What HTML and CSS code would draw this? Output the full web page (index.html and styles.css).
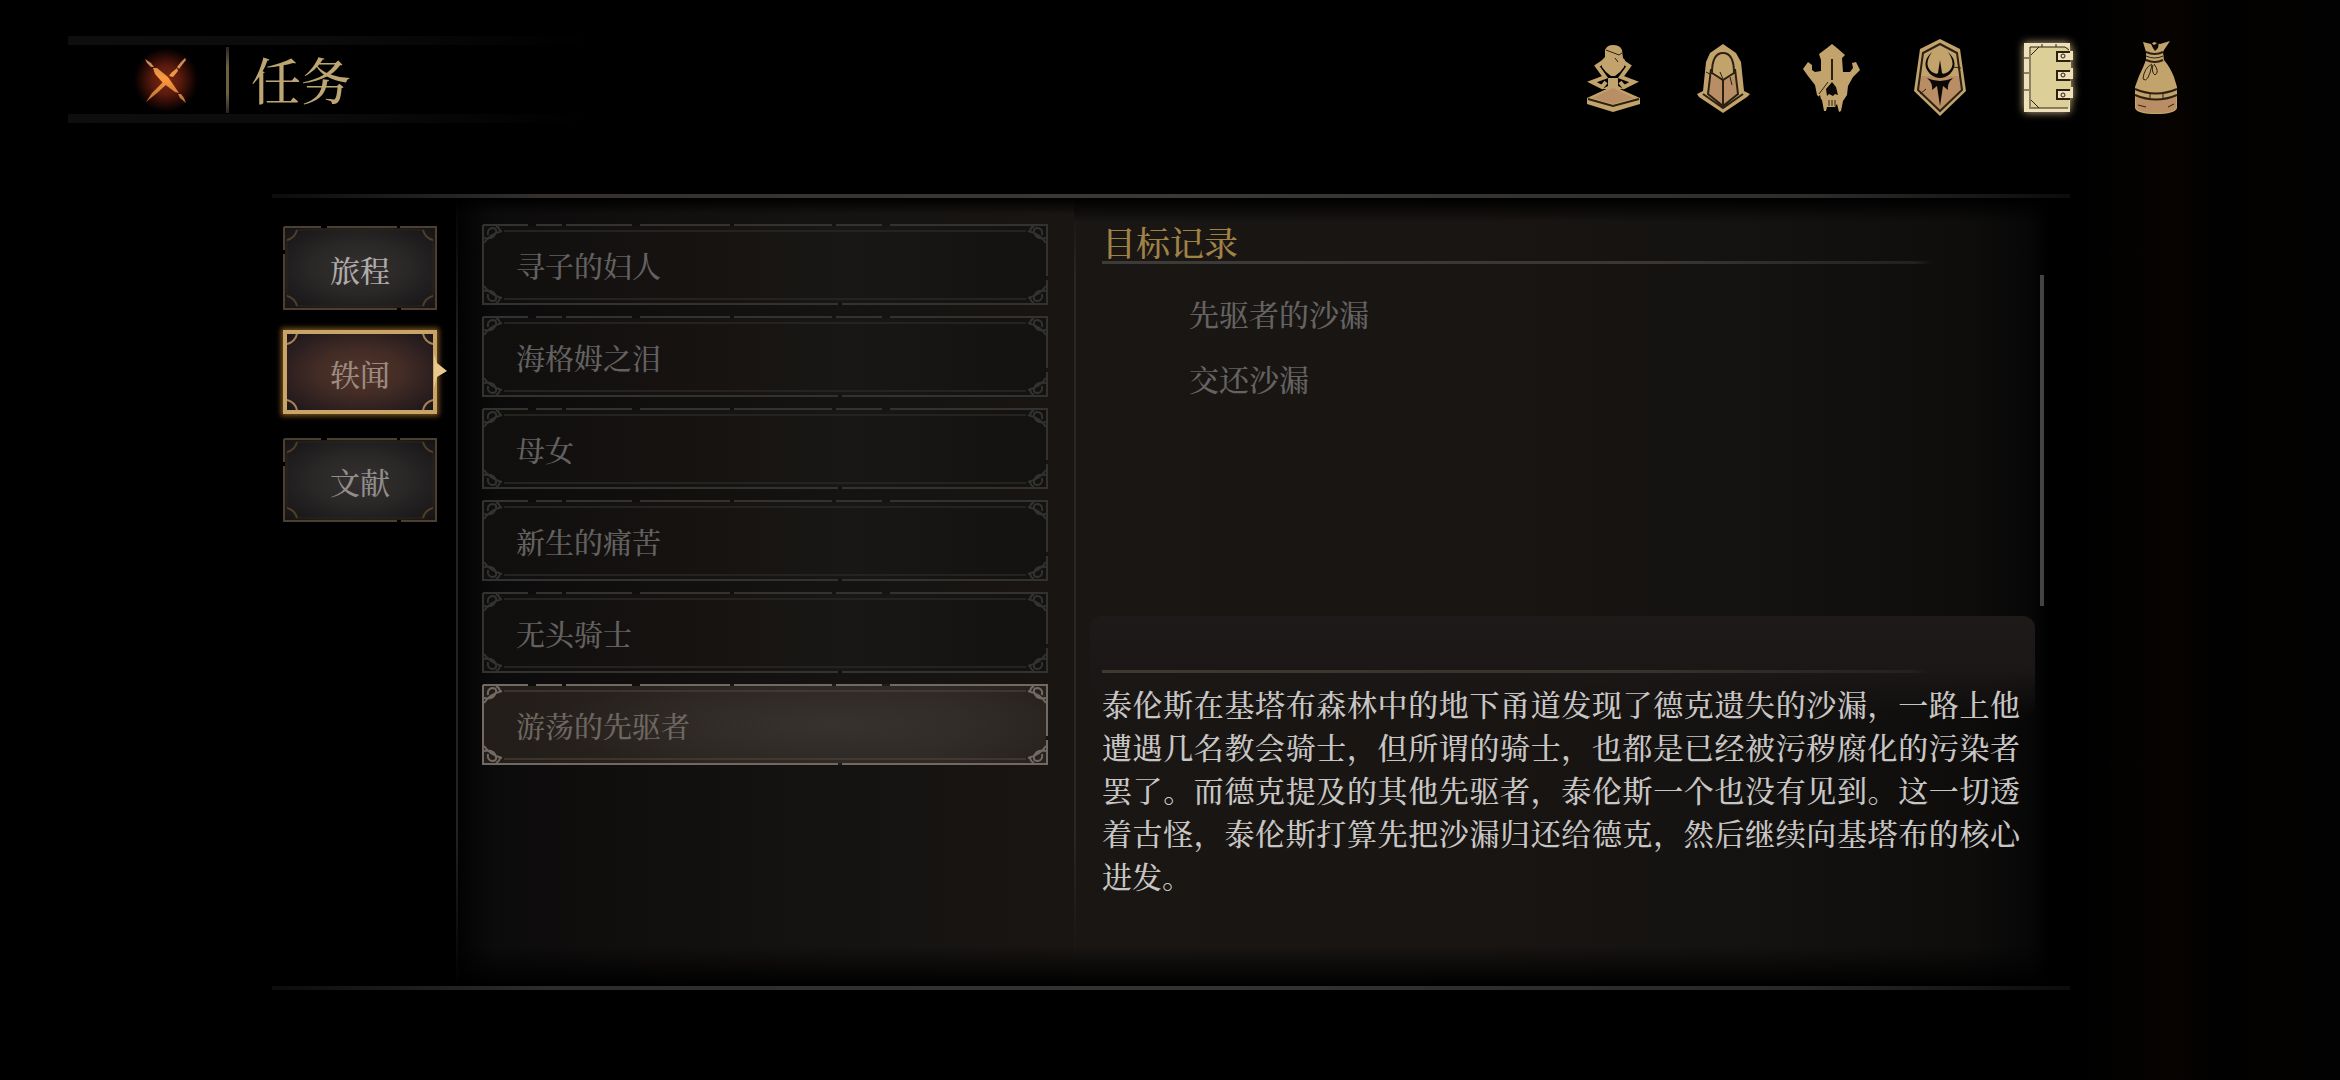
FILE: index.html
```html
<!DOCTYPE html>
<html lang="zh-CN">
<head>
<meta charset="utf-8">
<meta name="viewport" content="width=device-width, initial-scale=1">
<title>任务</title>
<link rel="stylesheet" href="styles.css">
</head>
<body>
<header class="topbar">
  <div class="title-plate">
    <button class="close" type="button" aria-label="关闭">
      <svg viewBox="0 0 44 48" width="44" height="48" aria-hidden="true">
        <defs>
          <linearGradient id="ember" x1="0" y1="0" x2="0" y2="1">
            <stop offset="0" stop-color="#b9895a"/><stop offset=".45" stop-color="#ff9a3c"/><stop offset="1" stop-color="#b5703a"/>
          </linearGradient>
        </defs>
        <path fill="url(#ember)" d="M41 2L42 4L38 9L35 13L33 11L37 6ZM33 12L34 15L29 21L25 20L27 17ZM20 25L23 28L13 37L2 46L8 37Z"/>
        <path fill="url(#ember)" d="M1 3L7 7L10 11L7 11L3 7ZM9 12L13 12L24 21L35 37L31 36L19 27L11 18ZM34 38L37 38L40 42L42 47L36 42Z"/>
      </svg>
    </button>
    <span class="title-rule"></span>
    <h1 class="title">任务</h1>
  </div>
  <nav class="menu" aria-label="菜单">
    <button class="menu-item" type="button" aria-label="角色">
      <svg viewBox="0 0 60 80" width="60" height="80" aria-hidden="true">
        <path class="ink" d="M19 12Q21 7 27 7Q34 7 36 12L37 20L39 22L38 29L34 34L29 38H25L20 34L16 29L16 22L19 19Z"/>
        <path class="cut" d="M20 12L33 17L36 15M29 20L32 24"/>
        <path class="bone" d="M17 24L11 28L19 39L6 44L16 49L20 44M37 24L43 28L35 39L48 44L38 49L34 44"/>
        <path class="ink" d="M22 40H32V48L38 51H16L22 48Z"/>
        <path class="ink" d="M27 48L54 60V66L27 74L1 66V60Z"/>
        <path class="warm" d="M27 50L48 60L27 66L6 60Z"/>
        <path class="cut w2" d="M2 61L27 68L53 61"/>
      </svg>
    </button>
    <button class="menu-item" type="button" aria-label="护甲">
      <svg viewBox="0 0 60 80" width="60" height="80" aria-hidden="true">
        <path class="ink" d="M29 6L42 15L47 24L50 53L56 56L53 59L29 75L5 59L3 56L9 53L12 24L16 15Z"/>
        <path class="warm" d="M16 37L29 43L42 37L44 57L29 67L14 57Z"/>
        <path class="cut w2" d="M18 35Q18 15 29 15T40 35L29 42ZM17 31L14 56L29 68L44 56L41 31M29 42V67M9 56L29 70L49 56"/>
        <path class="cut" d="M29 41L26 34M36 39L38 47M12 34L16 36"/>
      </svg>
    </button>
    <button class="menu-item" type="button" aria-label="兽骨">
      <svg viewBox="0 0 60 80" width="60" height="80" aria-hidden="true">
        <path class="ink" d="M30 6L35 10L43 17L40 20L41 34H48L51 30L50 25L54 24L58 32L51 39L46 48L45 57L41 63L39 73L37 74L35 66L33 69H25L24 73H22L20 62L15 57L13 47L6 38L1 31L6 24L10 27V32L13 34L19 33V22L17 16L25 10Z"/>
        <path class="hole" d="M30 44L34 49L36 57L33 56L31 58L27 56L25 58L24 51ZM18 57L15 60L19 61Z"/>
        <path class="cut w2" d="M30 21V42"/>
        <path class="cut" d="M26 44L17 56M27 62V68M30 62V68M33 62V68"/>
      </svg>
    </button>
    <button class="menu-item" type="button" aria-label="盾徽">
      <svg viewBox="0 0 60 80" width="60" height="80" aria-hidden="true">
        <path class="ink" d="M30 1L50 11L56 53L30 78L4 53L10 11Z"/>
        <path class="warm" d="M30 38L50 38L51 52L30 72L9 52L11 38Z"/>
        <path class="cut w2" d="M30 6L47 15L52 52L30 73L8 52L13 15Z"/>
        <path class="cut" d="M43 29L51 30M10 56L16 51"/>
        <path class="hole" d="M22 14Q13 27 22 34Q27 37 28 35L30 22L32 35Q33 37 38 34Q47 27 38 14Q50 25 40 36Q30 44 20 36Q10 25 22 14ZM17 40Q30 46 43 40Q37 45 38 52L33 48L30 68L27 48L22 52Q23 45 17 40Z"/>
      </svg>
    </button>
    <button class="menu-item is-current" type="button" aria-label="任务" aria-current="page">
      <svg viewBox="0 0 60 80" width="60" height="80" aria-hidden="true">
        <path fill="#eee0b8" d="M6 5H52V13H55V22H52V30H55V41H52V49H55V60H52V74H6Z"/>
        <path fill="#dccf98" d="M13 9H51V14H39V24H53V33H39V43H53V52H39V62H51V70H13Z"/>
        <path class="cut" d="M12 71V9H47L51 12M13 17L21 9M13 62L21 70M13 70H50M6 20H11M6 35H11M6 52H11M24 6V9M38 6V9"/>
        <path class="cut w2" d="M52 14H39V23H52M52 33H39V42H52M52 52H39V61H52"/>
        <circle class="cut" cx="45" cy="18" r="2"/><circle class="cut" cx="45" cy="37" r="2"/><circle class="cut" cx="45" cy="57" r="2"/>
      </svg>
    </button>
    <button class="menu-item" type="button" aria-label="背包">
      <svg viewBox="0 0 60 80" width="60" height="80" aria-hidden="true">
        <path class="ink" d="M17 4L25 6L28 4L34 6L44 3L38 12L37 14L38 22Q44 29 48 39L51 49V70Q49 76 30 76T9 70V49L13 38Q17 30 20 22V14Z"/>
        <path class="warm" d="M10 59Q30 66 50 59V70Q46 75 30 75T10 70Z"/>
        <path class="cut w2" d="M20 14Q29 18 37 14M20 22Q29 26 37 22M9 51Q30 60 51 51M9 57Q30 66 51 57"/>
        <path class="cut" d="M20 18Q29 22 37 18M26 26Q18 30 17 41Q22 46 26 27M27 27Q25 34 29 37Q34 34 28 26M24 55V60M37 55V60M12 67L20 69M42 69L48 66"/>
        <path class="hole" d="M24 4L28 7L33 4L32 10L29 13L27 10Z"/>
      </svg>
    </button>
  </nav>
</header>

<main class="journal">
  <nav class="tabs" aria-label="任务分类">
    <button class="tab" type="button">旅程</button>
    <button class="tab is-active" type="button" aria-current="true">轶闻
      <svg class="tab-arrow" viewBox="0 0 14 34" width="14" height="34" aria-hidden="true">
        <path fill="#e9c98b" d="M1 0L4 9L14 17L4 23L1 34Z"/>
      </svg>
    </button>
    <button class="tab" type="button">文献</button>
  </nav>

  <section class="quests" aria-label="任务列表">
    <button class="quest" type="button">寻子的妇人</button>
    <button class="quest" type="button">海格姆之泪</button>
    <button class="quest" type="button">母女</button>
    <button class="quest" type="button">新生的痛苦</button>
    <button class="quest" type="button">无头骑士</button>
    <button class="quest is-active" type="button" aria-current="true">游荡的先驱者</button>
  </section>

  <section class="detail">
    <div class="objectives">
      <div class="objectives-body">
        <h2 class="heading">目标记录</h2>
        <ul class="goals">
          <li>先驱者的沙漏</li>
          <li>交还沙漏</li>
        </ul>
      </div>
      <div class="scrollbar"></div>
    </div>
    <article class="story">
      <p>泰伦斯在基塔布森林中的地下甬道发现了德克遗失的沙漏，一路上他遭遇几名教会骑士，但所谓的骑士，也都是已经被污秽腐化的污染者罢了。而德克提及的其他先驱者，泰伦斯一个也没有见到。这一切透着古怪，泰伦斯打算先把沙漏归还给德克，然后继续向基塔布的核心进发。</p>
    </article>
  </section>
</main>
</body>
</html>
```
FILE: styles.css
```css
* {
  box-sizing: border-box;
}

body {
  margin: 0;
  min-height: 100vh;
  display: flex;
  flex-direction: column;
  color: #6b6867;
  background:
    linear-gradient(90deg, transparent 89%, #040201 91%, #060301 93%, #010101 95%, #040201 97%, #020202 100%),
    #000;
  font-family: "Noto Serif CJK SC", "Noto Sans CJK SC", serif;
  font-size: 30px;
  font-weight: 500;
}

button {
  margin: 0;
  padding: 0;
  border: 0;
  background: none;
  color: inherit;
  font: inherit;
  cursor: pointer;
}

h1, h2, p, ul {
  margin: 0;
  padding: 0;
  font-weight: inherit;
}

/* top bar */

.topbar {
  display: flex;
  justify-content: space-between;
  align-items: flex-start;
  height: 194px;
  padding: 36px 154px 0 68px;
}

.title-plate {
  display: flex;
  align-items: center;
  width: 522px;
  height: 87px;
  background:
    linear-gradient(90deg, #0e0e0e, #0b0b0b 50%, transparent) top / 100% 9px no-repeat,
    linear-gradient(90deg, #0e0e0e, #0b0b0b 50%, transparent) bottom / 100% 9px no-repeat;
}

.close {
  display: flex;
  align-items: center;
  justify-content: center;
  width: 64px;
  height: 64px;
  margin-left: 66px;
  background: radial-gradient(closest-side, #7a2a14, #5a1a0c 45%, #200804 80%, transparent);
}

.title-rule {
  width: 3px;
  height: 66px;
  margin-left: 28px;
  background: linear-gradient(#2a241a, #6e5f42 30%, #6e5f42 70%, #2a241a);
}

.title {
  margin-left: 22px;
  padding-bottom: 4px;
  font-size: 50px;
  line-height: 64px;
  color: #bda672;
}

.menu {
  display: flex;
  gap: 48px;
  margin-top: 2px;
}

.menu-item {
  width: 60px;
  height: 80px;
}

.menu-item svg {
  display: block;
}

.is-current svg {
  filter: drop-shadow(0 0 4px #c9b183);
}

.ink { fill: #c2a36b; }
.warm { fill: #b98e64; }
.hole { fill: #0c0805; }
.bone { fill: none; stroke: #c2a36b; stroke-width: 4; }
.cut { fill: none; stroke: #2c2013; stroke-width: 1; }
.w2 { stroke-width: 2; }

/* journal */

.journal {
  flex: 1;
  display: grid;
  grid-template-columns: 184px 618fr 996fr;
  margin: 0 270px 90px 272px;
  padding: 4px 0;
  background:
    linear-gradient(90deg, #0c0c0c, #33302e 15%, #3b3937 50%, #302e2c 85%, #0c0c0c) top / 100% 4px no-repeat,
    linear-gradient(90deg, #0c0c0c, #2e2c2b 15%, #353332 50%, #2a2827 85%, #0c0c0c) bottom / 100% 4px no-repeat;
}

.tabs {
  display: flex;
  flex-direction: column;
  gap: 20px;
  padding: 28px 19px 0 11px;
}

.tab {
  position: relative;
  height: 84px;
  padding-top: 2px;
  line-height: 40px;
  color: #aeabaa;
  border: 2px solid transparent;
  border-image-width: 16px;
  border-image-slice: 16;
  border-image-source: url("data:image/svg+xml,%3Csvg xmlns='http://www.w3.org/2000/svg' width='154' height='84' fill='none' stroke='%234d3f2b' stroke-width='2'%3E%3Cpath d='M1 1H38M44 1H114M117 1H153V83H118M114 83H1V28M1 24V1'/%3E%3Cpath d='M4 14Q12 12 14 4H140Q142 12 150 14V70Q142 72 140 80H14Q12 72 4 70Z' stroke='%232c251b' stroke-width='1'/%3E%3Cpath d='M4 14Q12 12 14 4M140 4Q142 12 150 14M150 70Q142 72 140 80M14 80Q12 72 4 70'/%3E%3C/svg%3E");
  background: radial-gradient(ellipse at center, #343030 0%, #2a2727 45%, #151314 100%) padding-box;
}

.tab:last-child {
  color: #908d8b;
}

.tab.is-active {
  margin-bottom: 4px;
  color: #9c8a7e;
  border-image-source: url("data:image/svg+xml,%3Csvg xmlns='http://www.w3.org/2000/svg' width='154' height='84' fill='none' stroke='%23c9a467' stroke-width='4'%3E%3Cpath d='M2 2H152V82H2Z'/%3E%3Cpath d='M4 14Q12 12 14 4M140 4Q142 12 150 14M150 70Q142 72 140 80M14 80Q12 72 4 70' stroke='%23a58452' stroke-width='2'/%3E%3C/svg%3E");
  background: radial-gradient(ellipse at center, #51352c 0%, #432c25 40%, #17131a 100%) padding-box;
  box-shadow: 0 0 5px 2px #76501f;
}

.tab-arrow {
  position: absolute;
  top: 22px;
  right: -12px;
}

.quests {
  display: flex;
  flex-direction: column;
  gap: 11px;
  padding: 26px 26px 0;
  background:
    linear-gradient(transparent, #242322 20%, #242322 80%, transparent) left / 2px 100% no-repeat,
    linear-gradient(#000 0, transparent 16px),
    linear-gradient(0deg, #000 0, transparent 40px),
    linear-gradient(90deg, #020202, #0c0b0b 6%, #110f0e 30%, #151311 60%, #181513);
}

.quest {
  height: 81px;
  padding: 2px 0 0 32px;
  text-align: left;
  font-size: 29px;
  line-height: 40px;
  color: #636160;
  border: 2px solid transparent;
  border-image-width: 24px;
  border-image-slice: 24;
  border-image-source: url("data:image/svg+xml,%3Csvg xmlns='http://www.w3.org/2000/svg' width='566' height='81' fill='none' stroke='%23323230' stroke-width='2'%3E%3Cdefs%3E%3Cg id='c'%3E%3Cpath d='M2 14Q12 16 14 8Q15 4 10 4Q5 5 6 11M2 19Q8 10 20 7M14 2Q18 4 18 8'/%3E%3C/g%3E%3C/defs%3E%3Cpath d='M1 1H46M54 1H80M84 1H150M158 1H248M252 1H350M354 1H400M408 1H565V52M565 56V80H360M356 80H1V1'/%3E%3Cpath d='M22 7H544M22 75H544' stroke='%23242322'/%3E%3Cuse href='%23c'/%3E%3Cuse href='%23c' transform='matrix(-1 0 0 1 566 0)'/%3E%3Cuse href='%23c' transform='matrix(1 0 0 -1 0 81)'/%3E%3Cuse href='%23c' transform='matrix(-1 0 0 -1 566 81)'/%3E%3C/svg%3E");
  background: linear-gradient(90deg, #110f0e, #161311 40%, #191715 65%, #141210) padding-box;
}

.quest.is-active {
  border-image-source: url("data:image/svg+xml,%3Csvg xmlns='http://www.w3.org/2000/svg' width='566' height='81' fill='none' stroke='%23726a62' stroke-width='2'%3E%3Cdefs%3E%3Cg id='c'%3E%3Cpath d='M2 14Q12 16 14 8Q15 4 10 4Q5 5 6 11M2 19Q8 10 20 7M14 2Q18 4 18 8'/%3E%3C/g%3E%3C/defs%3E%3Cpath d='M1 1H46M54 1H80M84 1H150M158 1H248M252 1H350M354 1H400M408 1H565V52M565 56V80H360M356 80H1V1'/%3E%3Cpath d='M22 7H544M22 75H544' stroke='%2355493e' stroke-width='1'/%3E%3Cuse href='%23c'/%3E%3Cuse href='%23c' transform='matrix(-1 0 0 1 566 0)'/%3E%3Cuse href='%23c' transform='matrix(1 0 0 -1 0 81)'/%3E%3Cuse href='%23c' transform='matrix(-1 0 0 -1 566 81)'/%3E%3C/svg%3E");
  color: #6d6761;
  background:
    radial-gradient(ellipse 50% 70% at 62% 50%, #37322d, transparent),
    linear-gradient(90deg, #231d19, #2a241f 40%, #2c2723 80%, #26211c) padding-box;
}

.detail {
  display: flex;
  flex-direction: column;
  padding: 0 26px 0 16px;
  background:
    linear-gradient(transparent 16px, #2a2827 80px, #2a2827 80%, transparent 96%) left / 2px 100% no-repeat,
    linear-gradient(#000 0, transparent 24px),
    linear-gradient(0deg, #000 0, transparent 40px),
    linear-gradient(90deg, #191614, #181513 40%, #141210 70%, #0e0d0c 90%, #080707 96%, #000 98%);
}

.objectives {
  flex: 1;
  display: flex;
  min-height: 418px;
}

.objectives-body {
  flex: 1;
  padding: 25px 15px 0 12px;
}

.heading {
  padding-bottom: 3px;
  font-size: 34px;
  line-height: 38px;
  color: #a08247;
  background: linear-gradient(90deg, #3d3a37, #393634 60%, #232120 88%, transparent 90%) bottom / 100% 3px no-repeat;
}

.goals {
  padding: 17px 0 0 87px;
  list-style: none;
  line-height: 65px;
  color: #656362;
}

.scrollbar {
  width: 4px;
  margin: 77px 0 10px;
  background: #444342;
}

.story {
  min-height: 370px;
  margin-right: 9px;
  padding: 54px 15px 0 12px;
  border-radius: 12px 12px 0 0;
  background: linear-gradient(#1e1a19, #1a1716 54px, transparent 100px);
}

.story p {
  padding-top: 12px;
  line-height: 43px;
  color: #c8c6c4;
  text-align: justify;
  background: linear-gradient(90deg, #40392f, #37322b 60%, #24211e 88%, transparent 90%) top / 100% 3px no-repeat;
}
```
